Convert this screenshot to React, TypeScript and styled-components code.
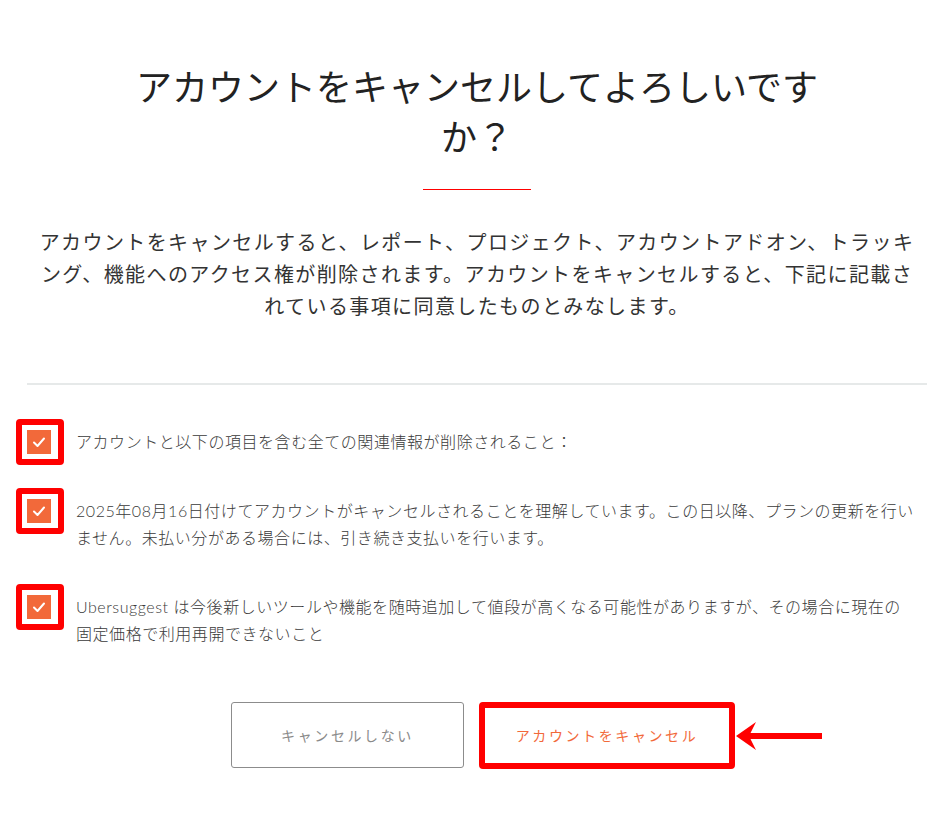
import React from 'react';
import styled, { createGlobalStyle } from 'styled-components';

const ORANGE = '#f2693a';
const MARK = '#ff0000';

const GlobalStyle = createGlobalStyle`
  body {
    margin: 0;
    background: #ffffff;
    font-family: 'Noto Sans CJK JP', 'Noto Sans', sans-serif;
  }
`;

const Page = styled.div`
  width: 900px;
  margin-left: 27px;
  padding-top: 60px;
  padding-bottom: 40px;
`;

const Title = styled.h1`
  max-width: 700px;
  margin: 0 auto;
  font-size: 36px;
  line-height: 50px;
  font-weight: 400;
  color: #222222;
  text-align: center;
`;

const Rule = styled.div`
  width: 108px;
  height: 0;
  margin: 29px auto 0;
  border-top: 1px solid ${MARK};
`;

const Lead = styled.p`
  max-width: 884px;
  margin: 36px auto 0;
  font-size: 20px;
  line-height: 32px;
  letter-spacing: 1.4px;
  color: #333333;
  text-align: center;
`;

const Divider = styled.hr`
  margin: 61px 0 0;
  border: 0;
  height: 2px;
  background: #e6e9e9;
`;

const List = styled.div`
  display: flex;
  flex-direction: column;
  gap: 42px;
  margin-top: 43px;
`;

const Item = styled.label`
  display: flex;
  align-items: flex-start;
  gap: 25px;
  padding-right: 12px;
`;

const Box = styled.span`
  position: relative;
  flex: none;
  width: 24px;
  height: 24px;
  margin-top: 2px;
  background: ${ORANGE};
  display: flex;
  align-items: center;
  justify-content: center;
`;

const Highlight = styled.span`
  position: absolute;
  inset: -11px -13px -11px -11px;
  border: 6px solid ${MARK};
  border-radius: 4px;
  pointer-events: none;
`;

const Label = styled.span`
  font-family: 'Lato', 'Noto Sans CJK JP', sans-serif;
  font-weight: 300;
  font-size: 16px;
  line-height: 27px;
  letter-spacing: 0.55px;
  color: #3a3a3a;
`;

const Buttons = styled.div`
  display: flex;
  justify-content: center;
  gap: 17px;
  margin-top: 55px;
  padding-left: 10px;
`;

const Button = styled.button<{ $primary?: boolean }>`
  position: relative;
  width: ${(p) => (p.$primary ? '252px' : '233px')};
  height: 66px;
  background: #ffffff;
  border: 1px solid ${(p) => (p.$primary ? ORANGE : '#8c8c8c')};
  border-radius: 3px;
  font-family: 'Noto Sans CJK JP', sans-serif;
  font-size: 14px;
  letter-spacing: 2.6px;
  color: ${(p) => (p.$primary ? ORANGE : '#8a8a8a')};
  cursor: pointer;
`;

const ButtonHighlight = styled.span`
  position: absolute;
  inset: -1px -3px -2px -3px;
  border: 6px solid ${MARK};
  border-radius: 4px;
  pointer-events: none;
`;

const Arrow = styled.svg`
  position: absolute;
  left: calc(100% + 4px);
  top: 19px;
  width: 86px;
  height: 28px;
`;

const Check = () => (
  <svg width="14" height="12" viewBox="0 0 14 12">
    <polyline
      points="2,6.5 5.5,10 12,2.5"
      fill="none"
      stroke="#ffffff"
      strokeWidth="2"
      strokeLinecap="round"
      strokeLinejoin="round"
    />
  </svg>
);

const items = [
  'アカウントと以下の項目を含む全ての関連情報が削除されること：',
  '2025年08月16日付けてアカウントがキャンセルされることを理解しています。この日以降、プランの更新を行いません。未払い分がある場合には、引き続き支払いを行います。',
  'Ubersuggest は今後新しいツールや機能を随時追加して値段が高くなる可能性がありますが、その場合に現在の固定価格で利用再開できないこと',
];

export default function App() {
  return (
    <>
      <GlobalStyle />
      <Page>
        <Title>アカウントをキャンセルしてよろしいですか？</Title>
        <Rule />
        <Lead>
          アカウントをキャンセルすると、レポート、プロジェクト、アカウントアドオン、トラッキング、機能へのアクセス権が削除されます。アカウントをキャンセルすると、下記に記載されている事項に同意したものとみなします。
        </Lead>
        <Divider />
        <List>
          {items.map((text) => (
            <Item key={text}>
              <Box>
                <Check />
                <Highlight />
              </Box>
              <Label>{text}</Label>
            </Item>
          ))}
        </List>
        <Buttons>
          <Button>キャンセルしない</Button>
          <Button $primary>
            アカウントをキャンセル
            <ButtonHighlight />
            <Arrow viewBox="0 0 86 28">
              <path d="M0 14 L20 0 L13 14 L20 28 Z" fill={MARK} />
              <rect x="12" y="11" width="74" height="6" fill={MARK} />
            </Arrow>
          </Button>
        </Buttons>
      </Page>
    </>
  );
}
